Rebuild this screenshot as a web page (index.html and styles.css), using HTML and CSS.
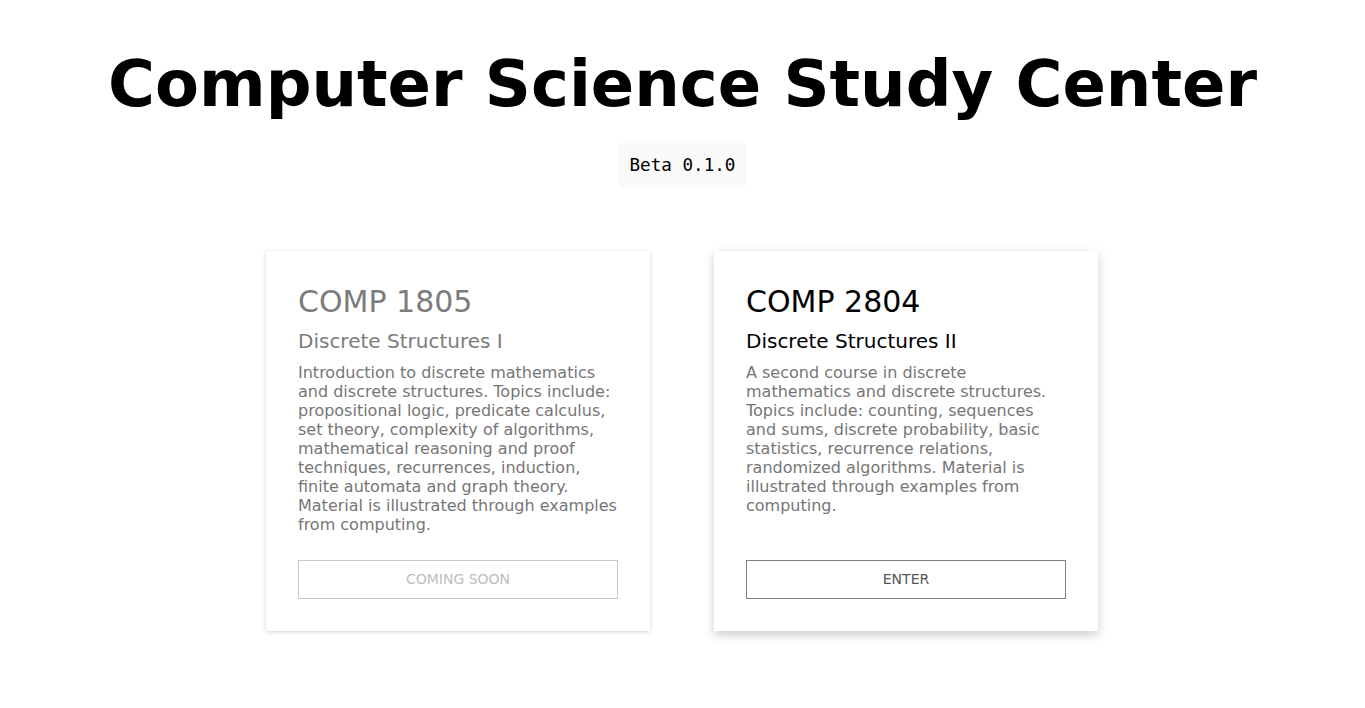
FILE: index.html
```html
<!DOCTYPE html>
<html lang="en">
<head>
<meta charset="utf-8">
<title>Computer Science Study Center</title>
<link rel="stylesheet" href="styles.css">
</head>
<body>
<header class="header">
  <h1 class="site-title">Computer Science Study Center</h1>
  <code class="version">Beta 0.1.0</code>
</header>
<main class="courses">
  <section class="card card-disabled">
    <h2 class="course-code">COMP 1805</h2>
    <h3 class="course-name">Discrete Structures I</h3>
    <p class="course-desc">Introduction to discrete mathematics and discrete structures. Topics include: propositional logic, predicate calculus, set theory, complexity of algorithms, mathematical reasoning and proof techniques, recurrences, induction, finite automata and graph theory. Material is illustrated through examples from computing.</p>
    <button class="course-btn btn-disabled" disabled>COMING SOON</button>
  </section>
  <section class="card card-active">
    <h2 class="course-code">COMP 2804</h2>
    <h3 class="course-name">Discrete Structures II</h3>
    <p class="course-desc">A second course in discrete mathematics and discrete structures. Topics include: counting, sequences and sums, discrete probability, basic statistics, recurrence relations, randomized algorithms. Material is illustrated through examples from computing.</p>
    <button class="course-btn btn-enter">ENTER</button>
  </section>
</main>
</body>
</html>
```
FILE: styles.css
```css
html, body {
  margin: 0;
  padding: 0;
  background: #ffffff;
}

body {
  font-family: "DejaVu Sans", sans-serif;
  color: #000;
  min-height: 708px;
}

.header {
  display: flex;
  flex-direction: column;
  align-items: center;
  padding-top: 47px;
}

.site-title {
  margin: 0;
  font-family: "DejaVu Sans", sans-serif;
  font-weight: bold;
  font-size: 64px;
  line-height: normal;
  color: #000;
}

.version {
  margin-top: 22px;
  padding: 12px;
  background: #f9f9f9;
  border-radius: 4px;
  font-family: "DejaVu Sans Mono", monospace;
  font-size: 17.6px;
  line-height: 20px;
  color: #000;
}

.courses {
  display: flex;
  justify-content: center;
  align-items: stretch;
  gap: 64px;
  margin-top: 64px;
  padding: 0 1px 64px 0;
}

.card {
  width: 384px;
  box-sizing: border-box;
  padding: 33px 32px 32px;
  background: #fff;
  display: flex;
  flex-direction: column;
}

.card-disabled {
  box-shadow: 0 1px 4px rgba(0, 0, 0, 0.18);
}

.card-active {
  box-shadow: 0 4px 10px rgba(0, 0, 0, 0.2);
}

.course-code {
  margin: 0 0 10px;
  font-size: 30px;
  font-weight: normal;
  line-height: normal;
}

.course-name {
  margin: 0 0 10px;
  font-size: 20px;
  font-weight: normal;
  line-height: normal;
}

.card-disabled .course-code,
.card-disabled .course-name {
  color: #7c7c7c;
}

.card-active .course-code,
.card-active .course-name {
  color: #000;
}

.course-desc {
  margin: 0 0 26px;
  font-size: 16px;
  line-height: 19px;
  color: #767676;
}

.course-btn {
  margin-top: auto;
  width: 100%;
  height: 39px;
  background: #fff;
  font-family: "DejaVu Sans", sans-serif;
  font-size: 14px;
  padding: 0 0 2px;
  cursor: pointer;
}

.btn-disabled {
  border: 1px solid #c8c8c8;
  color: #bdbdbd;
  cursor: default;
}

.btn-enter {
  border: 1px solid #808080;
  color: #555;
}
```
